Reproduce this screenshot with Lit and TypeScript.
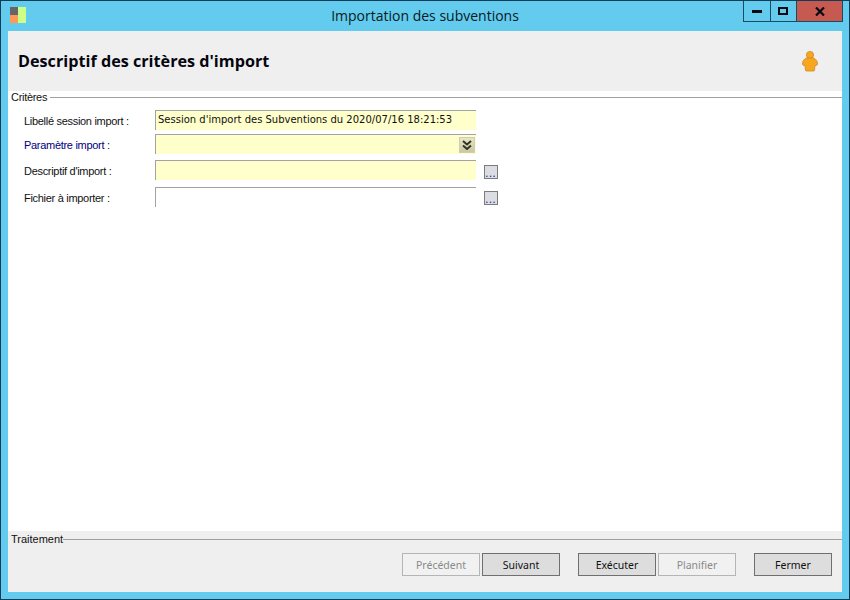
import { LitElement, html, css } from "lit";
import { customElement } from "lit/decorators.js";

@customElement("app-root")
export class AppRoot extends LitElement {
  static styles = css`
    :host {
      display: block;
      width: 850px;
      height: 600px;
      font-family: "Noto Sans", "Liberation Sans", sans-serif;
      color: #000;
    }
    * { box-sizing: border-box; }
    .window {
      width: 850px;
      height: 600px;
      background: #63cbee;
      border: 1px solid #0f3d57;
      display: flex;
      flex-direction: column;
      padding: 0 7px 7px;
    }
    .titlebar {
      height: 30px;
      flex: none;
      display: grid;
      grid-template-columns: 1fr auto 1fr;
      align-items: start;
    }
    .logo { margin: 6px 0 0 2px; display: block; }
    .title {
      font-family: "Open Sans", "Noto Sans", sans-serif;
      font-size: 14px;
      line-height: 20px;
      margin-top: 5px;
      color: #0a1a22;
    }
    .controls {
      justify-self: end;
      display: flex;
      height: 21px;
      margin-right: -1px;
      border: 1px solid #1b4a63;
      border-top: 0;
    }
    .ctl {
      display: flex;
      align-items: center;
      justify-content: center;
      border-right: 1px solid #1b4a63;
    }
    .ctl.min { width: 27px; }
    .ctl.max { width: 26px; }
    .ctl.close {
      width: 45px;
      border-right: 0;
      background: #c75a50;
    }
    .header {
      height: 60px;
      flex: none;
      background: #efefef;
      display: flex;
      align-items: center;
      justify-content: space-between;
      padding: 0 23px 0 10px;
    }
    .content {
      flex: 1;
      display: flex;
      flex-direction: column;
      min-height: 0;
    }
    h1 {
      margin: 0;
      font-family: "Open Sans", "Noto Sans", sans-serif;
      font-size: 16.2px;
      font-weight: 700;
      color: #05050f;
    }
    .main {
      flex: 1;
      background: #fff;
      min-height: 0;
    }
    .legend {
      display: flex;
      align-items: center;
      height: 13px;
      padding-left: 3px;
      font-family: "Liberation Sans", sans-serif;
      font-size: 11px;
      line-height: 13px;
      color: #111;
    }
    .legend .name.narrow { letter-spacing: -0.3px; }
    .legend .line {
      flex: 1;
      height: 1px;
      background: #a0a0a0;
      margin-left: 3px;
      margin-top: -1px;
    }
    .legend .tight { margin-left: 0; }
    .footer .legend { margin-top: 2px; }
    .gap4 { margin-top: 4px; }
    .gap6 { margin-top: 6px; }
    .gap7 { margin-top: 7px; }
    .rows { padding: 6px 0 0 16px; }
    .row {
      display: grid;
      grid-template-columns: 131px 321px auto;
      grid-template-rows: 20px;
      height: 20px;
    }
    .label {
      font-family: "Liberation Sans", sans-serif;
      font-size: 11px;
      letter-spacing: -0.3px;
      line-height: 23px;
      height: 20px;
      color: #111;
    }
    .label.req { color: #000080; }
    .input {
      border-top: 1px solid #a3a3a3;
      border-left: 1px solid #a3a3a3;
      font-family: "DejaVu Sans", sans-serif;
      font-size: 10px;
      line-height: 17px;
      padding-left: 2px;
      color: #111;
      display: flex;
      justify-content: flex-end;
      align-items: flex-start;
    }
    .input.text { justify-content: flex-start; }
    .input.yellow { background: #ffffcc; }
    .combo {
      width: 16px;
      height: 16px;
      margin: 2px 1px 0 0;
      background: linear-gradient(#e6e6c8, #c8c8a8);
      border: 1px solid #cfcfb0;
      display: flex;
      align-items: center;
      justify-content: center;
    }
    .dots {
      width: 14px;
      height: 14px;
      margin: 5px 0 0 8px;
      background: #dcdde2;
      border: 1px solid #7c7c80;
      display: flex;
      align-items: flex-end;
      justify-content: center;
      font: bold 9px/8px "Liberation Sans", sans-serif;
      color: #2a3f9a;
      letter-spacing: 1.2px;
    }
    .dots.up { margin-top: 4px; }
    .footer {
      height: 61px;
      flex: none;
      background: #efefef;
      display: flex;
      flex-direction: column;
    }
    .actions {
      display: flex;
      justify-content: flex-end;
      padding: 7px 10px 0 0;
    }
    button {
      width: 78px;
      height: 23px;
      padding: 0;
      font-family: "Noto Sans", "Liberation Sans", sans-serif;
      font-size: 10.5px;
      line-height: 20px;
      background: #dddddd;
      border: 1px solid #6f6f6f;
      color: #111;
    }
    button:disabled {
      background: #f1f1f1;
      border-color: #b5b5b5;
      color: #8a8a8a;
    }
    .ml2 { margin-left: 2px; }
    .ml18 { margin-left: 18px; }
  `;

  render() {
    return html`
      <div class="window">
        <div class="titlebar">
          <svg class="logo" width="17" height="17" viewBox="0 0 17 17">
            <rect x="0" y="0" width="8" height="8" fill="#666666"></rect>
            <rect x="0" y="8" width="8" height="8" fill="#ff9955"></rect>
            <rect x="8" y="0" width="8" height="16" fill="#ccff88"></rect>
          </svg>
          <div class="title">Importation des subventions</div>
          <div class="controls">
            <div class="ctl min">
              <svg width="11" height="4" viewBox="0 0 11 4"><rect width="10" height="3" y="1" fill="#0a0a14"></rect></svg>
            </div>
            <div class="ctl max">
              <svg width="11" height="9" viewBox="0 0 11 9"><rect x="1" y="1" width="8" height="6" fill="none" stroke="#0a0a14" stroke-width="2"></rect></svg>
            </div>
            <div class="ctl close">
              <svg width="10" height="9" viewBox="0 0 10 9"><path d="M1 0.5 L9 8.5 M9 0.5 L1 8.5" fill="none" stroke="#0a0a14" stroke-width="2.2"></path></svg>
            </div>
          </div>
        </div>
        <div class="content">
          <div class="header">
            <h1>Descriptif des critères d'import</h1>
            <svg width="18" height="22" viewBox="0 0 18 22">
              <circle cx="9" cy="5" r="3.6" fill="#f9a61f" stroke="#c98a2a" stroke-width="0.8"></circle>
              <path d="M5.5 8 C3 9 1.5 11 1.5 14 C1.5 15 2.5 15.5 4 15.5 L4.5 20.5 C4.5 21 5 21 5.5 21 L12.5 21 C13 21 13.5 21 13.5 20.5 L14 15.5 C15.5 15.5 16.5 15 16.5 14 C16.5 11 15 9 12.5 8 Z" fill="#f9a61f" stroke="#c98a2a" stroke-width="0.8"></path>
            </svg>
          </div>
          <div class="main">
            <div class="legend"><span class="name narrow">Critères</span><span class="line"></span></div>
            <div class="rows">
              <div class="row">
                <span class="label">Libellé session import :</span>
                <div class="input yellow text">Session d'import des Subventions du 2020/07/16 18:21:53</div>
              </div>
              <div class="row gap4">
                <span class="label req">Paramètre import :</span>
                <div class="input yellow">
                  <span class="combo">
                    <svg width="10" height="10" viewBox="0 0 10 10"><path d="M1 1 L5 4.5 L9 1 M1 5.5 L5 9 L9 5.5" fill="none" stroke="#333320" stroke-width="2"></path></svg>
                  </span>
                </div>
              </div>
              <div class="row gap6">
                <span class="label">Descriptif d'import :</span>
                <div class="input yellow"></div>
                <span class="dots">...</span>
              </div>
              <div class="row gap7">
                <span class="label">Fichier à importer :</span>
                <div class="input"></div>
                <span class="dots up">...</span>
              </div>
            </div>
          </div>
          <div class="footer">
            <div class="legend"><span class="name">Traitement</span><span class="line tight"></span></div>
            <div class="actions">
              <button disabled>Précédent</button>
              <button class="ml2">Suivant</button>
              <button class="ml18">Exécuter</button>
              <button class="ml2" disabled>Planifier</button>
              <button class="ml18">Fermer</button>
            </div>
          </div>
        </div>
      </div>
    `;
  }
}
